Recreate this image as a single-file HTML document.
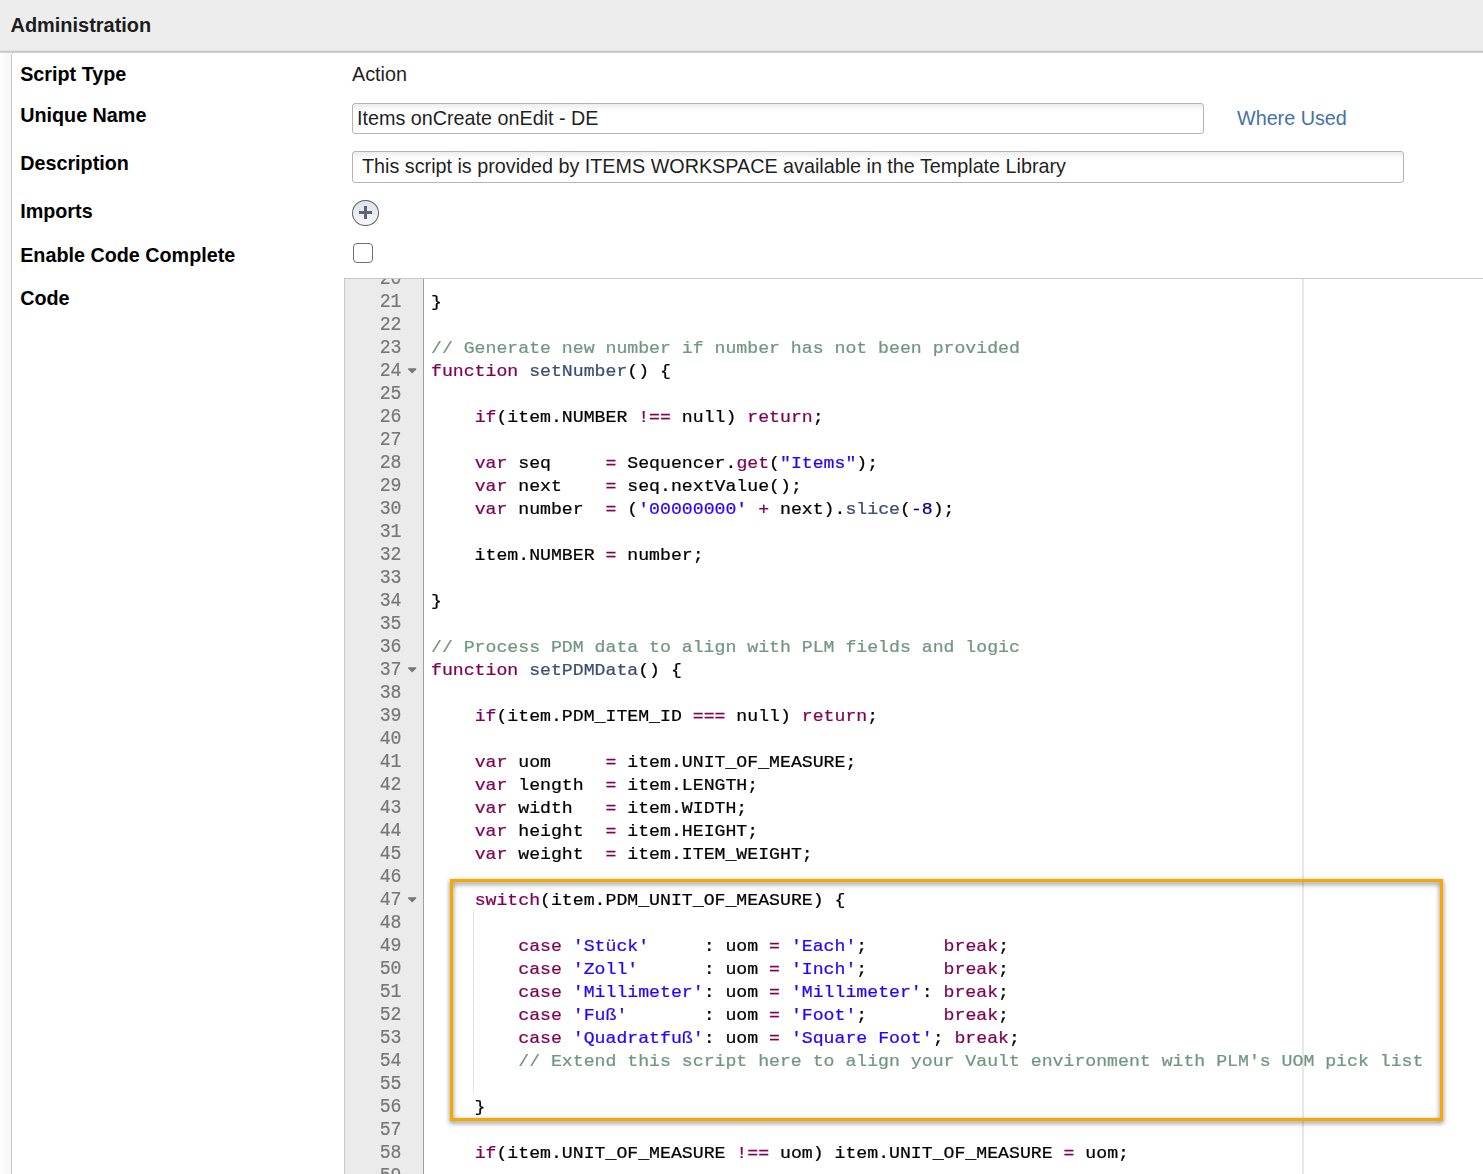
<!DOCTYPE html>
<html><head><meta charset="utf-8">
<style>
*{box-sizing:border-box}
html,body{margin:0;padding:0;width:1483px;height:1174px;overflow:hidden;background:#fff;font-family:"Liberation Sans",sans-serif}
#hdr{position:absolute;left:0;top:0;width:1483px;height:50px;background:#ededed}
#hdrb1{position:absolute;left:0;top:50px;width:1483px;height:1px;background:#e2e2e2}
#hdrb2{position:absolute;left:0;top:51px;width:1483px;height:2px;background:linear-gradient(#c7c7c7 50%,#cfcfcf 50%)}
#hdr span{position:absolute;left:10.5px;top:13.6px;font-size:19.95px;font-weight:bold;color:#1c1c1c;white-space:nowrap}
#leftstrip{position:absolute;left:0;top:53px;width:11px;height:1121px;background:linear-gradient(to right,#fdfdfd,#f6f6f6)}
#panel{position:absolute;left:11px;top:53px;width:1480px;height:1130px;border-left:1px solid #c8c8c8;border-top-left-radius:3px;background:#fff}
.lbl{position:absolute;left:20.2px;font-size:19.75px;font-weight:bold;color:#000;white-space:nowrap;line-height:23px}
.val{position:absolute;font-size:19.75px;color:#1f1f1f;white-space:nowrap;line-height:23px}
.inp{position:absolute;border:1px solid #b4b4b4;border-radius:3px;background:linear-gradient(#ededed,#fbfbfb 6px,#fff 9px)}
#link{position:absolute;left:1237px;font-size:19.75px;color:#4571a8;white-space:nowrap;line-height:23px}
#plus{position:absolute;left:352px;top:199.5px;width:27px;height:26.5px;border-radius:50%;border:1.9px solid #5a606c;background:linear-gradient(#dde1e8,#f6f7f9)}
#plus:before{content:"";position:absolute;left:5.5px;top:10.5px;width:13.5px;height:3px;background:#5d6370}
#plus:after{content:"";position:absolute;left:10.7px;top:5.5px;width:3px;height:13px;background:#5d6370}
#chk{position:absolute;left:353px;top:243px;width:20px;height:19.5px;border:1.8px solid #717171;border-radius:4px;background:#fff}
#ed{position:absolute;left:344px;top:278px;width:1200px;height:1000px;border-left:1px solid #c8c8c8;border-top:1px solid #c8c8c8;background:#fff;overflow:hidden}
#gut{position:absolute;left:345px;top:279px;width:78px;height:900px;background:#ebebeb}
#gutb{position:absolute;left:423px;top:279px;width:1px;height:900px;background:#9f9f9f}
#pm{position:absolute;left:1302px;top:279px;width:2px;height:900px;background:#e7e7e7}
#codeclip{position:absolute;left:0;top:279px;width:1483px;height:895px;overflow:hidden}
#codeclip .ln, #codeclip .gn{position:absolute;font-family:"Liberation Mono",monospace;font-size:18.18px;line-height:23px;height:23px;white-space:pre;}
.ln{left:431.0px;color:#000;transform:scaleY(0.92);transform-origin:0 16.34px;-webkit-text-stroke:0.25px currentColor}
.gn{left:345px;width:56.5px;text-align:right;color:#777;transform:scaleY(1.08);transform-origin:0 16.8px;-webkit-text-stroke:0.2px currentColor}
.k{color:rgb(127,0,85)}
.s{color:rgb(42,0,255)}
.c{color:rgb(113,150,130)}
.f{color:rgb(60,76,114)}
.n{color:darkblue}
.fold{position:absolute;left:407.8px;width:9px;height:7px}
#guide{position:absolute;left:473px;top:910.40px;width:1px;height:184px;background:repeating-linear-gradient(to bottom,#d0d0d0 0 1px,transparent 1px 2px)}
#box{position:absolute;left:450px;top:879px;width:993px;height:242px;border:3px solid #f6a800;filter:drop-shadow(0 2px 2.5px rgba(0,0,0,0.55))}
</style></head><body>
<div id="hdr"><span>Administration</span></div>
<div id="hdrb1"></div><div id="hdrb2"></div>
<div id="leftstrip"></div>
<div id="panel"></div>
<div class="lbl" style="top:63px">Script Type</div>
<div class="val" style="left:352px;top:62.7px">Action</div>
<div class="lbl" style="top:104px">Unique Name</div>
<div class="inp" style="left:352px;top:103px;width:852px;height:31px"></div>
<div class="val" style="left:357px;top:107px">Items onCreate onEdit - DE</div>
<div id="link" style="top:107.3px">Where Used</div>
<div class="lbl" style="top:152px">Description</div>
<div class="inp" style="left:352px;top:151px;width:1052px;height:32px"></div>
<div class="val" style="left:362px;top:155px">This script is provided by ITEMS WORKSPACE available in the Template Library</div>
<div class="lbl" style="top:200px">Imports</div>
<div id="plus"></div>
<div class="lbl" style="top:244px">Enable Code Complete</div>
<div id="chk"></div>
<div class="lbl" style="top:287px">Code</div>
<div id="ed"></div>
<div id="gut"></div>
<div id="gutb"></div>
<div id="pm"></div>
<div id="codeclip">
<div style="position:absolute;left:0;top:-279px;width:1483px;height:1174px">
<div class="ln" style="top:267.50px"></div>
<div class="gn" style="top:268.06px">20</div>
<div class="ln" style="top:290.50px">}</div>
<div class="gn" style="top:291.06px">21</div>
<div class="ln" style="top:313.50px"></div>
<div class="gn" style="top:314.06px">22</div>
<div class="ln" style="top:336.50px"><span class="c">// Generate new number if number has not been provided</span></div>
<div class="gn" style="top:337.06px">23</div>
<div class="ln" style="top:359.50px"><span class="k">function</span> <span class="f">setNumber</span>() {</div>
<div class="gn" style="top:360.06px">24</div>
<svg class="fold" style="top:367.74px" viewBox="0 0 9 7"><path d="M0.2,0.2 H8.2 V1.4 L4.2,5.6 L0.2,1.4 Z" fill="#777"/></svg>
<div class="ln" style="top:382.50px"></div>
<div class="gn" style="top:383.06px">25</div>
<div class="ln" style="top:405.50px">    <span class="k">if</span>(item.NUMBER <span class="k">!==</span> null) <span class="k">return</span>;</div>
<div class="gn" style="top:406.06px">26</div>
<div class="ln" style="top:428.50px"></div>
<div class="gn" style="top:429.06px">27</div>
<div class="ln" style="top:451.50px">    <span class="k">var</span> seq     <span class="k">=</span> Sequencer.<span class="k">get</span>(<span class="s">&quot;Items&quot;</span>);</div>
<div class="gn" style="top:452.06px">28</div>
<div class="ln" style="top:474.50px">    <span class="k">var</span> next    <span class="k">=</span> seq.nextValue();</div>
<div class="gn" style="top:475.06px">29</div>
<div class="ln" style="top:497.50px">    <span class="k">var</span> number  <span class="k">=</span> (<span class="s">&#x27;00000000&#x27;</span> <span class="k">+</span> next).<span class="f">slice</span>(<span class="n">-8</span>);</div>
<div class="gn" style="top:498.06px">30</div>
<div class="ln" style="top:520.50px"></div>
<div class="gn" style="top:521.06px">31</div>
<div class="ln" style="top:543.50px">    item.NUMBER <span class="k">=</span> number;</div>
<div class="gn" style="top:544.06px">32</div>
<div class="ln" style="top:566.50px"></div>
<div class="gn" style="top:567.06px">33</div>
<div class="ln" style="top:589.50px">}</div>
<div class="gn" style="top:590.06px">34</div>
<div class="ln" style="top:612.50px"></div>
<div class="gn" style="top:613.06px">35</div>
<div class="ln" style="top:635.50px"><span class="c">// Process PDM data to align with PLM fields and logic</span></div>
<div class="gn" style="top:636.06px">36</div>
<div class="ln" style="top:658.50px"><span class="k">function</span> <span class="f">setPDMData</span>() {</div>
<div class="gn" style="top:659.06px">37</div>
<svg class="fold" style="top:666.74px" viewBox="0 0 9 7"><path d="M0.2,0.2 H8.2 V1.4 L4.2,5.6 L0.2,1.4 Z" fill="#777"/></svg>
<div class="ln" style="top:681.50px"></div>
<div class="gn" style="top:682.06px">38</div>
<div class="ln" style="top:704.50px">    <span class="k">if</span>(item.PDM_ITEM_ID <span class="k">===</span> null) <span class="k">return</span>;</div>
<div class="gn" style="top:705.06px">39</div>
<div class="ln" style="top:727.50px"></div>
<div class="gn" style="top:728.06px">40</div>
<div class="ln" style="top:750.50px">    <span class="k">var</span> uom     <span class="k">=</span> item.UNIT_OF_MEASURE;</div>
<div class="gn" style="top:751.06px">41</div>
<div class="ln" style="top:773.50px">    <span class="k">var</span> length  <span class="k">=</span> item.LENGTH;</div>
<div class="gn" style="top:774.06px">42</div>
<div class="ln" style="top:796.50px">    <span class="k">var</span> width   <span class="k">=</span> item.WIDTH;</div>
<div class="gn" style="top:797.06px">43</div>
<div class="ln" style="top:819.50px">    <span class="k">var</span> height  <span class="k">=</span> item.HEIGHT;</div>
<div class="gn" style="top:820.06px">44</div>
<div class="ln" style="top:842.50px">    <span class="k">var</span> weight  <span class="k">=</span> item.ITEM_WEIGHT;</div>
<div class="gn" style="top:843.06px">45</div>
<div class="ln" style="top:865.50px"></div>
<div class="gn" style="top:866.06px">46</div>
<div class="ln" style="top:888.50px">    <span class="k">switch</span>(item.PDM_UNIT_OF_MEASURE) {</div>
<div class="gn" style="top:889.06px">47</div>
<svg class="fold" style="top:896.74px" viewBox="0 0 9 7"><path d="M0.2,0.2 H8.2 V1.4 L4.2,5.6 L0.2,1.4 Z" fill="#777"/></svg>
<div class="ln" style="top:911.50px"></div>
<div class="gn" style="top:912.06px">48</div>
<div class="ln" style="top:934.50px">        <span class="k">case</span> <span class="s">&#x27;Stück&#x27;</span>     : uom <span class="k">=</span> <span class="s">&#x27;Each&#x27;</span>;       <span class="k">break</span>;</div>
<div class="gn" style="top:935.06px">49</div>
<div class="ln" style="top:957.50px">        <span class="k">case</span> <span class="s">&#x27;Zoll&#x27;</span>      : uom <span class="k">=</span> <span class="s">&#x27;Inch&#x27;</span>;       <span class="k">break</span>;</div>
<div class="gn" style="top:958.06px">50</div>
<div class="ln" style="top:980.50px">        <span class="k">case</span> <span class="s">&#x27;Millimeter&#x27;</span>: uom <span class="k">=</span> <span class="s">&#x27;Millimeter&#x27;</span>: <span class="k">break</span>;</div>
<div class="gn" style="top:981.06px">51</div>
<div class="ln" style="top:1003.50px">        <span class="k">case</span> <span class="s">&#x27;Fuß&#x27;</span>       : uom <span class="k">=</span> <span class="s">&#x27;Foot&#x27;</span>;       <span class="k">break</span>;</div>
<div class="gn" style="top:1004.06px">52</div>
<div class="ln" style="top:1026.50px">        <span class="k">case</span> <span class="s">&#x27;Quadratfuß&#x27;</span>: uom <span class="k">=</span> <span class="s">&#x27;Square Foot&#x27;</span>; <span class="k">break</span>;</div>
<div class="gn" style="top:1027.06px">53</div>
<div class="ln" style="top:1049.50px">        <span class="c">// Extend this script here to align your Vault environment with PLM&#x27;s UOM pick list</span></div>
<div class="gn" style="top:1050.06px">54</div>
<div class="ln" style="top:1072.50px"></div>
<div class="gn" style="top:1073.06px">55</div>
<div class="ln" style="top:1095.50px">    }</div>
<div class="gn" style="top:1096.06px">56</div>
<div class="ln" style="top:1118.50px"></div>
<div class="gn" style="top:1119.06px">57</div>
<div class="ln" style="top:1141.50px">    <span class="k">if</span>(item.UNIT_OF_MEASURE <span class="k">!==</span> uom) item.UNIT_OF_MEASURE <span class="k">=</span> uom;</div>
<div class="gn" style="top:1142.06px">58</div>
<div class="ln" style="top:1164.50px"></div>
<div class="gn" style="top:1165.06px">59</div>
<div id="guide"></div>
</div>
</div>
<div id="box"></div>
</body></html>
